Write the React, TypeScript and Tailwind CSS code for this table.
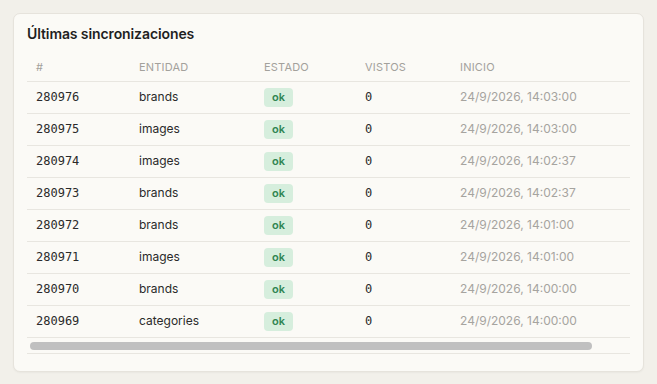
import React from "react";

const rows = [
  { id: "280976", entity: "brands", time: "24/9/2026, 14:03:00" },
  { id: "280975", entity: "images", time: "24/9/2026, 14:03:00" },
  { id: "280974", entity: "images", time: "24/9/2026, 14:02:37" },
  { id: "280973", entity: "brands", time: "24/9/2026, 14:02:37" },
  { id: "280972", entity: "brands", time: "24/9/2026, 14:01:00" },
  { id: "280971", entity: "images", time: "24/9/2026, 14:01:00" },
  { id: "280970", entity: "brands", time: "24/9/2026, 14:00:00" },
  { id: "280969", entity: "categories", time: "24/9/2026, 14:00:00" },
];

export default function App() {
  return (
    <div
      className="w-[657px] h-[384px] bg-[#f2f0ea] p-[13px]"
      style={{ fontFamily: "Inter, 'Noto Sans', sans-serif" }}
    >
      <div className="h-[359px] rounded-[7px] border border-[#e6e3dc] bg-[#fbfaf6] px-[13px] pt-[10px] shadow-[0_1px_2px_rgba(0,0,0,0.04)]">
        <h2 className="text-[14px] leading-[20px] font-semibold text-[#1f1f1f] tracking-[-0.1px]">
          Últimas sincronizaciones
        </h2>
        <div className="mt-[9px] w-[603px]">
          <div className="overflow-hidden">
            <table className="w-[648px] border-collapse table-fixed">
              <colgroup>
                <col className="w-[103px]" />
                <col className="w-[125px]" />
                <col className="w-[101px]" />
                <col className="w-[95px]" />
                <col />
              </colgroup>
              <thead>
                <tr className="border-b border-[#e8e6e0] h-[28px]">
                  {["#", "Entidad", "Estado", "Vistos", "Inicio"].map((h) => (
                    <th
                      key={h}
                      className="px-[9px] text-left align-middle text-[11px] font-normal uppercase tracking-[0.2px] text-[#a3a19c]"
                    >
                      {h}
                    </th>
                  ))}
                </tr>
              </thead>
              <tbody>
                {rows.map((r) => (
                  <tr key={r.id} className="h-[32px] border-b border-[#e8e6e0]">
                    <td
                      className="px-[9px] text-[12px] text-[#2a2a2a]"
                      style={{ fontFamily: "'DejaVu Sans Mono', monospace" }}
                    >
                      {r.id}
                    </td>
                    <td className="px-[9px] text-[12px] text-[#2a2a2a]">{r.entity}</td>
                    <td className="px-[9px] align-middle">
                      <span className="flex h-[19px] w-[29px] items-center justify-center rounded-[4px] bg-[#d6eedd] text-[11px] font-semibold text-[#2f8552]">
                        ok
                      </span>
                    </td>
                    <td
                      className="px-[9px] text-[12px] text-[#2a2a2a]"
                      style={{ fontFamily: "'DejaVu Sans Mono', monospace" }}
                    >
                      0
                    </td>
                    <td className="px-[9px] text-[12px] text-[#a6a49f] whitespace-nowrap">{r.time}</td>
                  </tr>
                ))}
              </tbody>
            </table>
          </div>
          <div className="h-[16px] border-b border-[#e8e6e0] pt-[4px] pl-[3px]">
            <div className="h-[8px] w-[562px] rounded-full bg-[#c0c0c0]" />
          </div>
        </div>
      </div>
    </div>
  );
}
